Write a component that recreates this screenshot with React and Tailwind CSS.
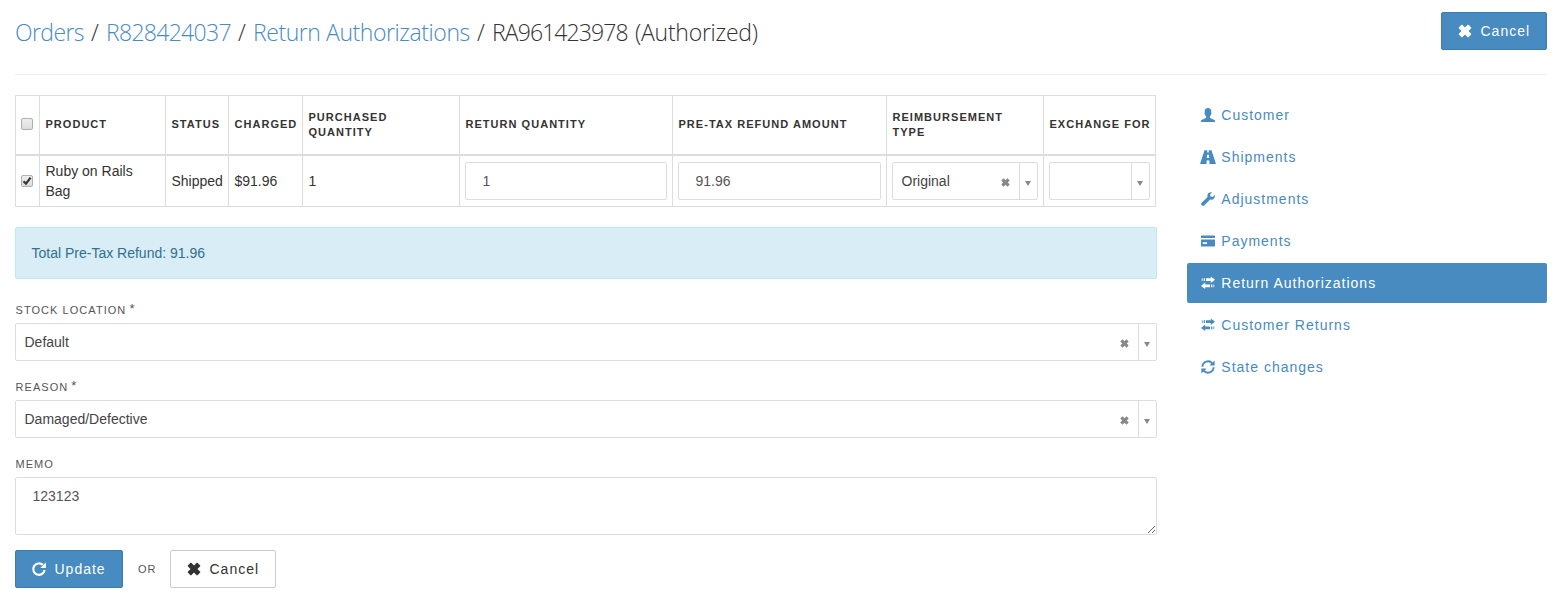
const ICONS = {
  remove: (
    <path d="M.8 3.500 3.500.8Q3.900.5 4.300.8L7 3.500 9.700.8Q10.100.5 10.500.8L13.200 3.500Q13.500 3.900 13.200 4.300L10.500 7 13.200 9.700Q13.500 10.100 13.200 10.500L10.500 13.200Q10.100 13.500 9.700 13.200L7 10.500 4.300 13.200Q3.900 13.500 3.500 13.200L.8 10.500Q.5 10.100.8 9.700L3.500 7 .8 4.300Q.5 3.900.8 3.500Z" />
  ),
  user: (
    <path d="M7 0C9.200 0 10.300 1.300 10.300 3.200c0 .7-.1 1.200-.1 1.600.5.200.4 1.500-.3 1.900-.3 1-.9 1.700-1 2.100v.9c.2.700 4 1.500 4.800 2.500.4.500.4 1.200.4 1.800H-.1c0-.6 0-1.300.4-1.800.8-1 4.600-1.800 4.800-2.500v-.9c-.1-.4-.7-1.100-1-2.100-.7-.4-.8-1.700-.3-1.900 0-.4-.1-.9-.1-1.600C3.700 1.300 4.800 0 7 0Z" />
  ),
  road: (
    <path
      fillRule="evenodd"
      d="M3.500.2H6.200V2.600H7.800V.2H10.500L15 14H8.400V10.400H5.600V14H-1ZM6 4.800 5.800 8H8.200L8 4.800Z"
    />
  ),
  wrench: (
    <path d="M13.700 3.100c.5 1.700-.2 3.300-1.500 4.100-.9.600-2 .7-3 .4L3.100 13.500c-.6.600-1.400.6-2 .1l-.6-.6c-.6-.6-.6-1.400 0-2L6.500 4.900c-.3-1.400.1-2.800 1.100-3.800C8.600.2 10 0 11.100.3L9.100 2.400l.4 2.100 2.100.5Z" />
  ),
  card: (
    <path
      fillRule="evenodd"
      d="M.6 1.500H13.400Q14 1.500 14 2.100V4H0V2.100Q0 1.500.6 1.500ZM0 5.600H14V12Q14 12.600 13.400 12.600H.6Q0 12.600 0 12ZM1.700 8.200V10H6V8.200Z"
    />
  ),
  transfer: (
    <path d="M9.800.5 14 3.800 9.800 7V5.100H5V2.300H9.800ZM.8 2.300H1.600V5.100H.8ZM2.700 2.300H4V5.100H2.700ZM4.200 6.600 0 9.900 4.200 13.100V11.300H9V8.500H4.200ZM10 8.500H11.300V11.300H10ZM12.400 8.500H13.200V11.300H12.400Z" />
  ),
  refresh: (
    <g fill="none" stroke="currentColor" strokeWidth="1.900">
      <path d="M1.400 6.700A5.600 5.600 0 0 1 11.300 3.300M12.600 7.300A5.600 5.600 0 0 1 2.700 10.700" />
      <path d="M13.600.4V5.500H8.500ZM.4 13.600V8.500H5.500Z" fill="currentColor" stroke="none" />
    </g>
  ),
  repeat: (
    <g fill="none" stroke="currentColor" strokeWidth="2.200">
      <path d="M12.600 8A5.700 5.700 0 1 1 10.800 2.900" />
      <path d="M13.900.3V5.900H8.300Z" fill="currentColor" stroke="none" />
    </g>
  ),
};

function Icon({ name, className = "size-3.5" }) {
  return (
    <svg viewBox="0 0 14 14" fill="currentColor" className={`shrink-0 overflow-visible ${className}`}>
      {ICONS[name]}
    </svg>
  );
}

const BUTTON_STYLES = {
  primary: "border-[#3d7cab] bg-[#478bc1] text-white",
  plain: "border-[#cccccc] bg-white text-[#333333]",
};

function Button({ icon, variant, className, children }) {
  return (
    <button
      className={`flex h-[38px] items-center gap-[9px] rounded-xs border pl-[15.500px] text-sm tracking-[1px] ${BUTTON_STYLES[variant]} ${className}`}
    >
      <Icon name={icon} />
      {children}
    </button>
  );
}

function Select({ value, clearable }) {
  return (
    <div className="flex h-[38px] items-stretch rounded-xs border border-[#dddddd] bg-white text-sm text-[#444444]">
      <span className="flex flex-1 items-center pl-[8.500px]">{value}</span>
      {clearable && (
        <span className="flex items-center pt-0.5 pr-[9px] text-[#888888]">
          <Icon name="remove" className="size-[9px]" />
        </span>
      )}
      <span className="flex w-[18px] items-center justify-center border-l border-[#dddddd] pt-[5px] pr-[1.500px] text-[#888888]">
        <svg viewBox="0 0 6 5" className="h-[5px] w-1.5" fill="currentColor">
          <path d="M0 0H6L3 5Z" />
        </svg>
      </span>
    </div>
  );
}

function TextInput({ value }) {
  return (
    <input
      defaultValue={value}
      className="block h-[38px] w-full rounded-xs border border-[#dddddd] pl-[16.500px] text-sm text-[#555555]"
    />
  );
}

function Checkbox({ checked }) {
  return (
    <div className="flex size-3 items-center justify-center rounded-xs border border-[#b0b0b0] bg-linear-to-b from-[#eeeeee] to-[#dcdcdc]">
      {checked && (
        <svg viewBox="0 0 10 10" className="size-2.5 shrink-0" fill="none" stroke="#333333" strokeWidth="2.200">
          <path d="M1.500 5.200 4 7.700 8.600 1.600" />
        </svg>
      )}
    </div>
  );
}

function Label({ required, children }) {
  return (
    <label className="flex h-[15px] items-center pl-[0.500px] text-[11px] leading-[15px] tracking-[1.050px] text-[#555555] uppercase">
      {children}
      {required && <span className="-mt-[5px] ml-[3px] text-[13px]">*</span>}
    </label>
  );
}

const HEADINGS = [
  "Product",
  "Status",
  "Charged",
  "Purchased\nQuantity",
  "Return Quantity",
  "Pre-Tax Refund Amount",
  "Reimbursement\nType",
  "Exchange For",
];

const LINKS = [
  ["user", "Customer"],
  ["road", "Shipments"],
  ["wrench", "Adjustments"],
  ["card", "Payments"],
  ["transfer", "Return Authorizations", true],
  ["transfer", "Customer Returns"],
  ["refresh", "State changes"],
];

const CELL = "border-l border-[#dddddd] py-0 text-left";

function ItemsTable() {
  return (
    <table className="w-[1141px] table-fixed border-separate border-spacing-0 border-r border-[#dddddd] text-sm text-[#333333]">
      <colgroup>
        <col className="w-[24px]" />
        <col className="w-[126px]" />
        <col className="w-[63px]" />
        <col className="w-[74px]" />
        <col className="w-[157px]" />
        <col className="w-[213px]" />
        <col className="w-[214px]" />
        <col className="w-[157px]" />
        <col className="w-[112px]" />
      </colgroup>
      <thead>
        <tr className="h-[61px]">
          <th className={`${CELL} border-t border-b-2 pr-0 pb-0.5 pl-[5px]`}>
            <Checkbox />
          </th>
          {HEADINGS.map((heading) => (
            <th
              key={heading}
              className={`${CELL} border-t border-b-2 pr-0 pb-px pl-[5.500px] text-[11px] leading-[15px] font-bold tracking-[1.030px] whitespace-pre uppercase`}
            >
              {heading}
            </th>
          ))}
        </tr>
      </thead>
      <tbody>
        <tr className="h-[51px]">
          <td className={`${CELL} border-b pr-0 pb-px pl-[5px]`}>
            <Checkbox checked />
          </td>
          <td className={`${CELL} border-b pr-5 pl-[5.500px] leading-5`}>Ruby on Rails Bag</td>
          <td className={`${CELL} border-b pr-0 pl-[5.500px]`}>Shipped</td>
          <td className={`${CELL} border-b pr-0 pl-[5.500px]`}>$91.96</td>
          <td className={`${CELL} border-b pr-0 pl-[5.500px]`}>1</td>
          <td className={`${CELL} border-b px-[5px]`}>
            <TextInput value="1" />
          </td>
          <td className={`${CELL} border-b px-[5px]`}>
            <TextInput value="91.96" />
          </td>
          <td className={`${CELL} border-b px-[5px]`}>
            <Select value="Original" clearable />
          </td>
          <td className={`${CELL} border-b px-[5px]`}>
            <Select />
          </td>
        </tr>
      </tbody>
    </table>
  );
}

export default function App() {
  return (
    <div className="h-[611px] w-[1561px] overflow-hidden bg-white pr-[14px] pl-[15px] font-['Liberation_Sans',Arial,sans-serif]">
      <header className="flex h-[75px] items-start justify-between border-b border-[#eeeeee] pt-3">
        <h1 className="flex h-[41px] items-center font-['Open_Sans',sans-serif] text-[23px] font-light whitespace-pre text-[#333333]">
          <a className="w-[76px] tracking-[-0.600px] text-[#478bc1]">Orders</a>
          <span className="w-[15px]">/</span>
          <a className="w-[132px] tracking-[-0.700px] text-[#478bc1]">R828424037</a>
          <span className="w-[15px]">/</span>
          <a className="w-[224px] tracking-[-0.430px] text-[#478bc1]">Return Authorizations</a>
          <span className="w-[15px]">/</span>
          <span className="w-[143px] tracking-[-0.900px]">RA961423978</span>
          <span className="tracking-[-0.250px]">(Authorized)</span>
        </h1>
        <Button icon="remove" variant="primary" className="w-[106px]">
          Cancel
        </Button>
      </header>

      <div className="flex items-start gap-[30px] pt-5">
        <main className="w-[1142px]">
          <ItemsTable />

          <div className="mt-5 flex h-[52px] items-center rounded-xs border border-[#bce8f1] bg-[#d9edf7] pl-[15.500px] text-sm text-[#31708f]">
            Total Pre-Tax Refund: 91.96
          </div>

          <form className="mt-6 flex flex-col">
            <div className="flex flex-col gap-[5px]">
              <Label required>Stock Location</Label>
              <Select value="Default" clearable />
            </div>
            <div className="mt-[19px] flex flex-col gap-[5px]">
              <Label required>Reason</Label>
              <Select value="Damaged/Defective" clearable />
            </div>
            <div className="mt-[19px] flex flex-col gap-[5px]">
              <Label>Memo</Label>
              <textarea
                defaultValue="123123"
                className="block h-[58px] w-full resize rounded-xs border border-[#dddddd] px-[16.500px] py-2 text-sm leading-5 text-[#555555]"
              />
            </div>
            <div className="mt-[15px] flex items-center">
              <Button icon="repeat" variant="primary" className="w-[108px]">
                Update
              </Button>
              <span className="w-[47px] pl-[15px] text-[11px] tracking-[1.050px] text-[#555555]">OR</span>
              <Button icon="remove" variant="plain" className="w-[106px]">
                Cancel
              </Button>
            </div>
          </form>
        </main>

        <nav className="flex flex-1 flex-col gap-0.5">
          {LINKS.map(([icon, text, active]) => (
            <a
              key={text}
              className={`flex h-10 items-center gap-[6px] rounded-xs pl-[14.300px] text-sm tracking-[1px] ${
                active ? "bg-[#478bc1] text-white" : "text-[#478bc1]"
              }`}
            >
              <Icon name={icon} />
              {text}
            </a>
          ))}
        </nav>
      </div>
    </div>
  );
}
